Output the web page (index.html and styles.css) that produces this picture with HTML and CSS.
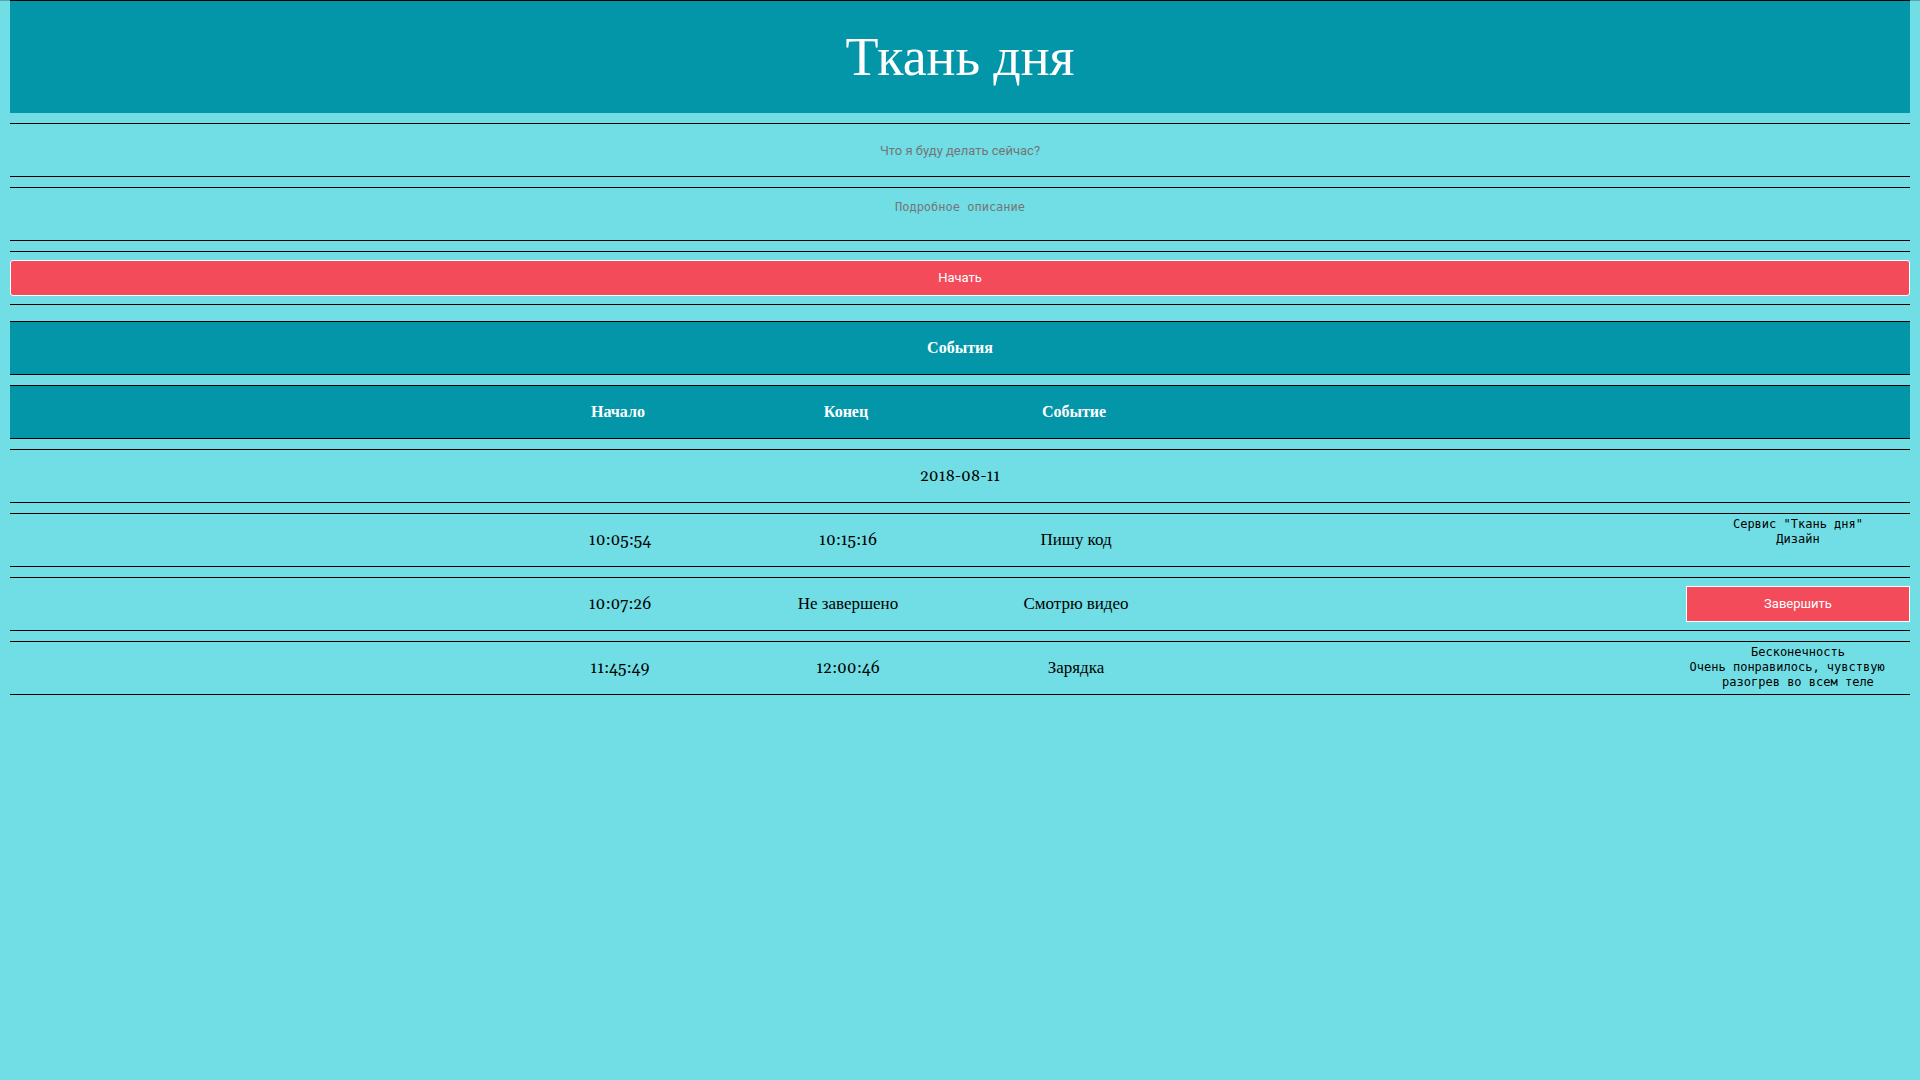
FILE: index.html
```html
<!DOCTYPE html>
<html lang="ru">
<head>
<meta charset="utf-8">
<meta name="viewport" content="width=device-width, initial-scale=1">
<title>Ткань дня</title>
<link rel="stylesheet" href="styles.css">
</head>
<body>
<header class="header"><h1 class="title">Ткань дня</h1></header>
<main>
<form class="form">
<div class="row"><input class="field" type="text" placeholder="Что я буду делать сейчас?" aria-label="Что я буду делать сейчас?"></div>
<div class="row"><textarea class="field field-area" placeholder="Подробное описание" aria-label="Подробное описание"></textarea></div>
<div class="row"><button class="button button-start" type="button">Начать</button></div>
</form>
<table class="events">
<colgroup><col class="col-lead"><col class="col-data"><col class="col-data"><col class="col-data"><col><col class="col-note"></colgroup>
<thead>
<tr><th colspan="6">События</th></tr>
<tr><th></th><th>Начало</th><th>Конец</th><th>Событие</th><th></th><th></th></tr>
</thead>
<tbody>
<tr><td colspan="6">2018-08-11</td></tr>
<tr><td></td><td>10:05:54</td><td>10:15:16</td><td class="words">Пишу код</td><td></td><td class="note-cell"><pre class="note">Сервис "Ткань дня"
Дизайн</pre></td></tr>
<tr><td></td><td>10:07:26</td><td class="words">Не завершено</td><td class="words">Смотрю видео</td><td></td><td><button class="button" type="button">Завершить</button></td></tr>
<tr><td></td><td>11:45:49</td><td>12:00:46</td><td class="words">Зарядка</td><td></td><td class="note-cell"><pre class="note">Бесконечность
Очень понравилось, чувствую   
разогрев во всем теле</pre></td></tr>
</tbody>
</table>
</main>
</body>
</html>
```

FILE: styles.css
```css
* {
  box-sizing: border-box;
}

html {
  background: #71dee5;
}

body {
  margin: 0;
  padding: 0 10px;
  color: #000;
  font: 16px/20px Georgia, Gelasio, "Liberation Serif", serif;
  box-shadow: inset 0 1px rgba(0, 0, 0, 0.25);
}

.header {
  padding: 30px 0 26px;
  border-top: 1px solid #000;
  background: #0396a8;
  color: #fff;
  text-align: center;
}

.title {
  margin: 0;
  font-size: 54px;
  font-weight: 400;
  line-height: 56px;
}

.form {
  display: flex;
  flex-direction: column;
  gap: 10px;
  padding: 10px 0 6px;
}

.row {
  display: flex;
  align-items: center;
  min-height: 54px;
  border-top: 1px solid #000;
  border-bottom: 1px solid #000;
}

.field {
  display: block;
  width: 100%;
  height: 52px;
  margin: 0;
  padding: 0;
  border: 0;
  outline: 0;
  background: transparent;
  color: #000;
  font: 13px/16px Roboto, "Liberation Sans", sans-serif;
  text-align: center;
}

.field::placeholder {
  color: #757575;
}

.field-area {
  padding-top: 12px;
  font: 12px/15px "DejaVu Sans Mono", monospace;
  resize: none;
}

.button {
  display: block;
  width: 100%;
  height: 36px;
  padding: 0;
  border: 1px solid #fff;
  background: #f34b5a;
  color: #fff;
  font: 13px/16px Roboto, "Liberation Sans", sans-serif;
  cursor: pointer;
}

.button-start {
  border-radius: 3px;
}

.events {
  width: 100%;
  table-layout: fixed;
  border-spacing: 0 10px;
}

.col-lead {
  width: 26%;
}

.col-data {
  width: 12%;
}

.col-note {
  width: 224px;
}

th,
td {
  height: 54px;
  padding: 0;
  border-top: 1px solid #000;
  border-bottom: 1px solid #000;
  text-align: center;
}

td:nth-child(n + 2):nth-child(-n + 4) {
  padding-left: 4px;
}

th {
  background: #0396a8;
  color: #fff;
  font-weight: 700;
}

.words {
  font-size: 17px;
}

.note-cell {
  padding-top: 3px;
  vertical-align: top;
}

.note {
  margin: 0;
  font: 12px/15px "DejaVu Sans Mono", monospace;
}
```
